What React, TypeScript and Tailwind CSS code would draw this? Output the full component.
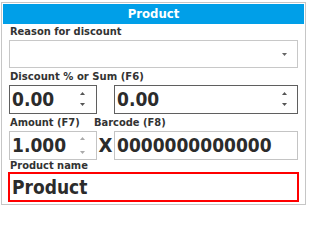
import React from "react";

const font = { fontFamily: '"DejaVu Sans Condensed","DejaVu Sans",sans-serif' };

function Up({ c }: { c: string }) {
  return (
    <svg width="5" height="3" viewBox="0 0 5 3" className="block">
      <polygon points="0,3 5,3 2.5,0" fill={c} />
    </svg>
  );
}
function Down({ c }: { c: string }) {
  return (
    <svg width="5" height="3" viewBox="0 0 5 3" className="block">
      <polygon points="0,0 5,0 2.5,3" fill={c} />
    </svg>
  );
}

export default function App() {
  return (
    <div className="w-[307px] h-[206px] bg-white pt-[2px] pl-[1px] font-bold text-[#333] [font-stretch:condensed]" style={font}>
      <div className="w-[305px] h-[203px] border border-[#c6c6c6] p-[1px] flex flex-col">
        <div className="h-[20px] bg-[#009fe8] text-white text-[13px] leading-[20px] text-center">Product</div>
        <div className="px-[6px] flex flex-col">
          <div className="h-[16px] pl-[1px] text-[11px] leading-[16px]">Reason for discount</div>
          <div className="h-[28px] border border-[#c8c8c8] flex items-center justify-end pr-[10px]">
            <Down c="#666" />
          </div>
          <div className="h-[17px] pl-[1px] pt-[1px] text-[11.2px] leading-[16px]">Discount % or Sum (F6)</div>
          <div className="flex gap-[17px]">
            <div className="w-[88px] h-[29px] border border-[#5f5f5f] flex items-center justify-between pl-[2px] pr-[11px]">
              <span className="text-[19px] leading-[27px] text-[#2b2b2b]">0.00</span>
              <div className="flex flex-col gap-[8px] mt-[-1px]">
                <Up c="#555" />
                <Down c="#555" />
              </div>
            </div>
            <div className="flex-1 h-[29px] border border-[#5f5f5f] flex items-center justify-between pl-[2px] pr-[10px]">
              <span className="text-[19px] leading-[27px] text-[#2b2b2b]">0.00</span>
              <div className="flex flex-col gap-[8px] mt-[-1px]">
                <Up c="#555" />
                <Down c="#555" />
              </div>
            </div>
          </div>
          <div className="h-[17px] pl-[1px] pt-[1px] text-[11px] leading-[16px] flex">
            <span className="w-[84px]">Amount (F7)</span>
            <span>Barcode (F8)</span>
          </div>
          <div className="flex items-stretch">
            <div className="w-[88px] h-[29px] border border-[#c4c4c4] flex items-center justify-between pl-[2px] pr-[11px]">
              <span className="text-[19px] leading-[27px] text-[#2b2b2b]">1.000</span>
              <div className="flex flex-col gap-[11px]">
                <Up c="#aaa" />
                <Down c="#aaa" />
              </div>
            </div>
            <div className="w-[17px] flex items-center justify-center text-[20px] leading-[27px] text-[#2b2b2b]">X</div>
            <div className="flex-1 h-[29px] border border-[#c4c4c4] flex items-center pl-[2px]">
              <span className="text-[19px] leading-[27px] text-[#2b2b2b]">0000000000000</span>
            </div>
          </div>
          <div className="h-[12px] pl-[1px] text-[11px] leading-[12px]">Product name</div>
          <div className="h-[30px] border-2 border-[#ff0000] flex items-center pl-[2px] ml-[-1px] mr-[-1px]">
            <span className="text-[19px] leading-[26px] text-[#2b2b2b]">Product</span>
          </div>
        </div>
      </div>
    </div>
  );
}
